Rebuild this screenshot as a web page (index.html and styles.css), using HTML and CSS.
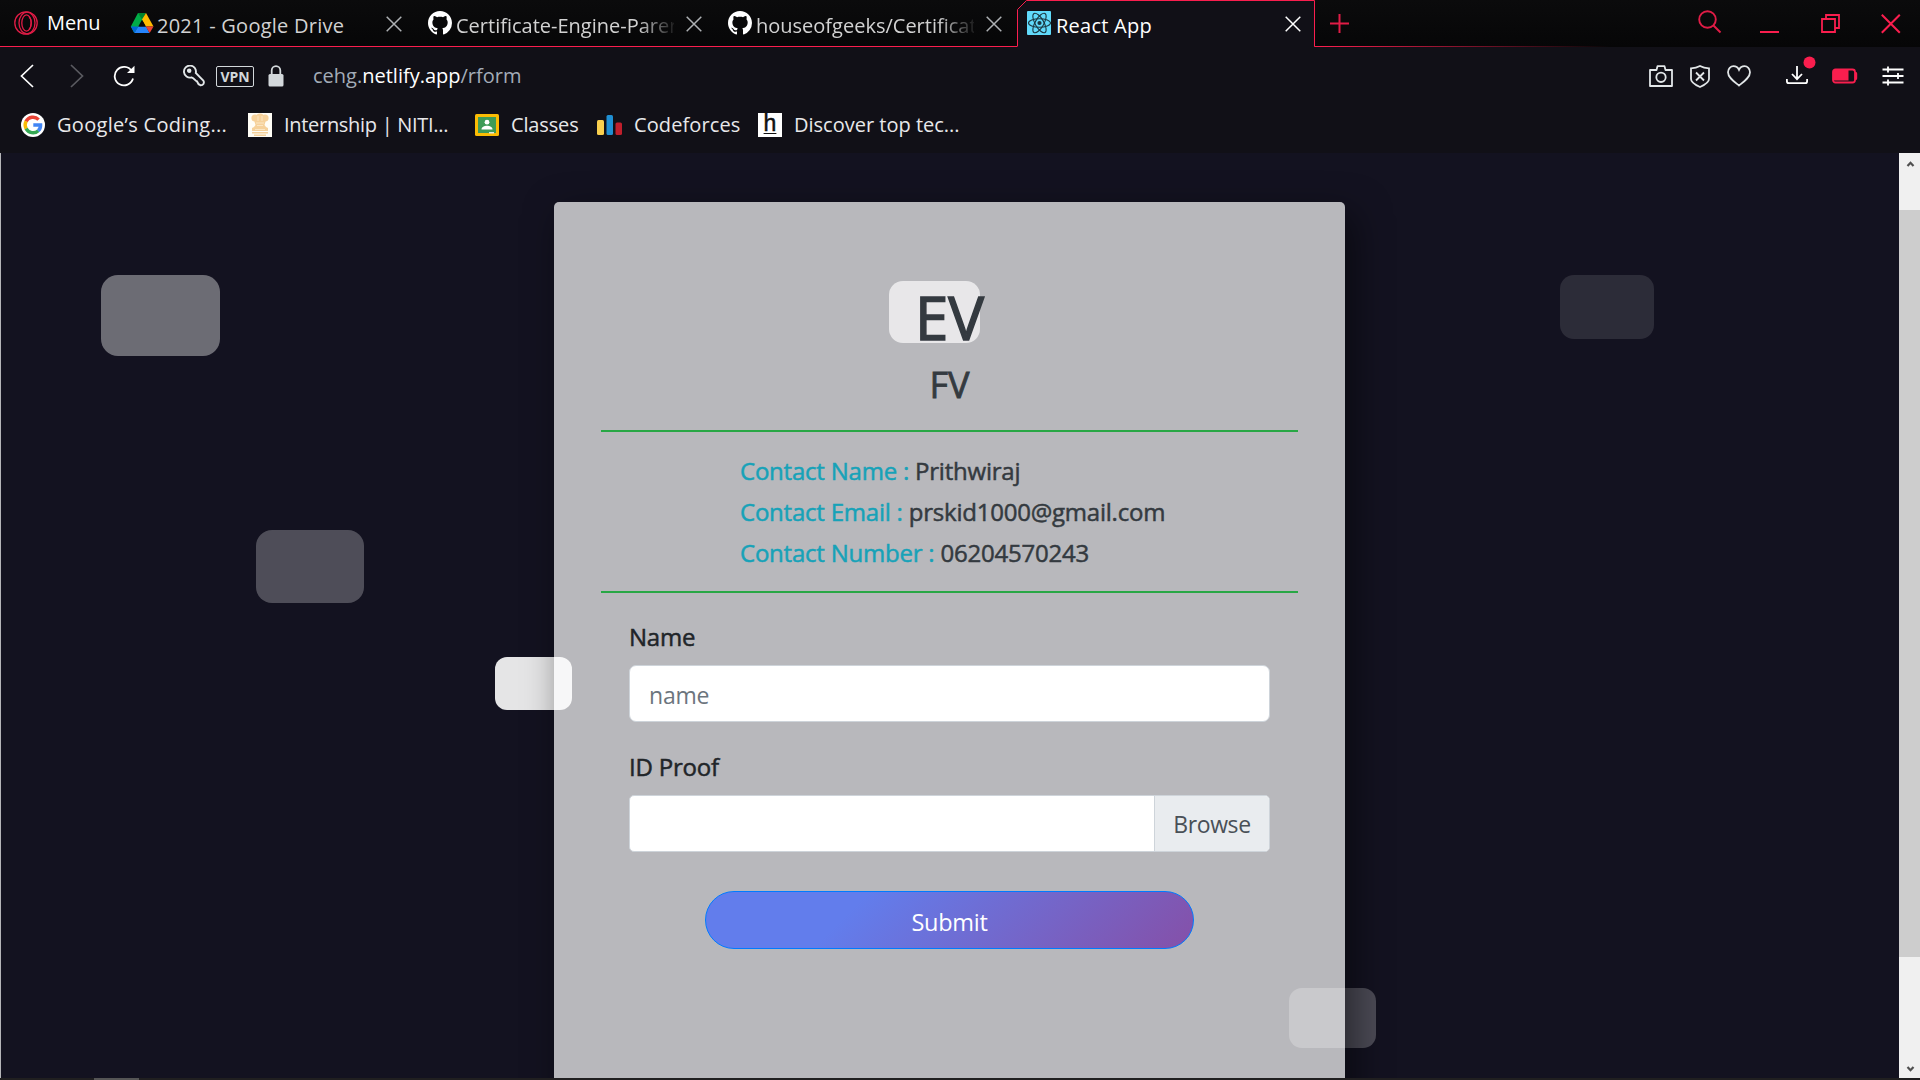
FILE: index.html
```
<!DOCTYPE html>
<html lang="en">
<head>
<meta charset="utf-8">
<title>React App</title>
<link rel="stylesheet" href="styles.css">
</head>
<body>
<svg class="defs" width="0" height="0">
  <defs>
    <symbol id="github" viewBox="0 0 16 16"><path fill="#fff" d="M8 0C3.58 0 0 3.58 0 8c0 3.54 2.29 6.53 5.47 7.59.4.07.55-.17.55-.38 0-.19-.01-.82-.01-1.49-2.01.37-2.53-.49-2.69-.94-.09-.23-.48-.94-.82-1.13-.28-.15-.68-.52-.01-.53.63-.01 1.08.58 1.23.82.72 1.21 1.87.87 2.33.66.07-.52.28-.87.51-1.07-1.78-.2-3.64-.89-3.64-3.95 0-.87.31-1.59.82-2.15-.08-.2-.36-1.02.08-2.12 0 0 .67-.21 2.2.82.64-.18 1.32-.27 2-.27s1.36.09 2 .27c1.53-1.04 2.2-.82 2.2-.82.44 1.1.16 1.92.08 2.12.51.56.82 1.27.82 2.15 0 3.07-1.87 3.75-3.65 3.95.29.25.54.73.54 1.48 0 1.07-.01 1.93-.01 2.2 0 .21.15.46.55.38A8.01 8.01 0 0 0 16 8c0-4.42-3.58-8-8-8z"/></symbol>
    <symbol id="cross" viewBox="0 0 16 16"><path d="M.7.7l14.6 14.6M15.3.7L.7 15.3" fill="none" stroke="currentColor" stroke-width="1.5"/></symbol>
  </defs>
</svg>

<header class="browser">
  <div class="tabstrip">
    <div class="menu">
      <svg width="24" height="24" viewBox="0 0 24 24" fill="none" stroke="#e01c46" stroke-width="1.3"><circle cx="12" cy="12" r="11.2"/><ellipse cx="13" cy="12" rx="8" ry="10.8"/><ellipse cx="12.5" cy="12" rx="4.7" ry="8.2"/><path d="M15 5.5c3 3 3 10 0 13"/></svg>
      <span>Menu</span>
    </div>
    <div class="tab tab-drive">
      <svg width="24" height="24" viewBox="0 0 24 24"><path fill="#00ac47" d="M8 2h3.6L15 8 4.3 22 .8 15.500z"/><path fill="#00832d" d="M8 2h8l-4 6.500z"/><path fill="#ffba00" d="M16 2l7.500 13.500h-7.800L12 8.500z"/><path fill="#2684fc" d="M8.300 15.500h7.800L19.500 22H4.300z"/><path fill="#0066da" d="M.8 15.500h7.500L4.300 22z"/><path fill="#ea4335" d="M15.700 15.500h7.800L19.700 22z"/><path fill="#090909" d="M12 8.800l3.800 6.700H8.200z"/></svg>
      <span class="title">2021 - Google Drive</span>
      <svg class="close" width="16" height="16"><use href="#cross"/></svg>
    </div>
    <div class="tab tab-parent">
      <svg width="24" height="24"><use href="#github"/></svg>
      <span class="title fade">Certificate-Engine-Parent</span>
      <svg class="close" width="16" height="16"><use href="#cross"/></svg>
    </div>
    <div class="tab tab-repo">
      <svg width="24" height="24"><use href="#github"/></svg>
      <span class="title fade">houseofgeeks/Certificate</span>
      <svg class="close" width="16" height="16"><use href="#cross"/></svg>
    </div>
    <div class="tab tab-active">
      <svg class="outline" width="300" height="48" viewBox="0 0 300 48"><path d="M.5 48V9.500L9.500.500H297.500V46.500H300V48z" fill="#111017"/><path d="M.5 46V9.500L9.500.500H297.500V46.500H300" fill="none" stroke="#fa1e4e"/></svg>
      <svg width="24" height="24" viewBox="0 0 24 24"><rect width="24" height="24" rx="1" fill="#61dafb"/><g fill="none" stroke="#1b3640" stroke-width="1.100"><ellipse cx="12.500" cy="12" rx="11" ry="4.300"/><ellipse cx="12.500" cy="12" rx="11" ry="4.300" transform="rotate(60 12.500 12)"/><ellipse cx="12.500" cy="12" rx="11" ry="4.300" transform="rotate(120 12.500 12)"/></g><circle cx="12.500" cy="12" r="2.100" fill="#1b3640"/></svg>
      <span class="title">React App</span>
      <svg class="close" width="16" height="16"><use href="#cross"/></svg>
    </div>
    <svg class="newtab" width="20" height="20" viewBox="0 0 20 20"><path d="M9.500 0v19M0 9.500h19" stroke="#e01c46" stroke-width="2"/></svg>
    <div class="window-controls">
      <svg width="24" height="24" viewBox="0 0 24 24" fill="none" stroke="#e01c46" stroke-width="1.900"><circle cx="9.500" cy="9.500" r="8.300"/><path d="M15.500 15.500l7 7"/></svg>
      <svg width="20" height="20" viewBox="0 0 20 20" fill="none" stroke="#fa1e4e" stroke-width="2"><path d="M0 18h19"/></svg>
      <svg width="20" height="20" viewBox="0 0 20 20" fill="none" stroke="#fa1e4e" stroke-width="1.800"><path d="M1 5h13v13H1zM5 5V1h13v13h-4"/></svg>
      <svg width="20" height="20" viewBox="0 0 20 20" fill="none" stroke="#fa1e4e" stroke-width="2"><path d="M.8.800l18 18M18.800.800l-18 18"/></svg>
    </div>
  </div>

  <div class="toolbar">
    <svg class="back" width="14" height="24" viewBox="0 0 14 24" fill="none" stroke="#fff" stroke-width="1.700"><path d="M13 1L1.500 12 13 23"/></svg>
    <svg class="forward" width="14" height="24" viewBox="0 0 14 24" fill="none" stroke="#5a5a60" stroke-width="1.700"><path d="M1 1l11.500 11L1 23"/></svg>
    <svg class="reload" width="23" height="22" viewBox="0 0 23 22"><path d="M20 13.500A9.300 9.300 0 1 1 18.800 6" fill="none" stroke="#fff" stroke-width="1.800"/><path d="M21.500.8V8H14z" fill="#fff"/></svg>
    <svg class="key" width="22" height="22" viewBox="0 0 22 22" fill="none" stroke="#e2e6e8" stroke-width="1.900"><path d="M8.500 12.400A6 6 0 1 1 12.800 8L20.300 15.500c1.500 2.500-.2 5-3 4.700-2.600-1-2.600-2.300-3.100-3.700-2-.6-2.600-3-5.700-4.100z"/><circle cx="6.200" cy="5.700" r="1.300" fill="#e2e6e8"/></svg>
    <span class="vpn">VPN</span>
    <svg class="lock" width="16" height="22" viewBox="0 0 16 22"><path d="M3.700 10V5.500a4.300 4.300 0 0 1 8.600 0V10" fill="none" stroke="#d3d8db" stroke-width="1.800"/><rect x=".5" y="9" width="15" height="12.500" rx="1.500" fill="#d3d8db"/></svg>
    <div class="url">cehg.<b>netlify.app</b>/rform</div>
    <div class="tools">
      <svg width="24" height="22" viewBox="0 0 24 22" fill="none" stroke="#e2e6e8" stroke-width="1.800"><path d="M1 5h6.500l1-3.800h7L16.500 5H23v16H1z" stroke-linejoin="round"/><circle cx="12" cy="12.300" r="4.700"/></svg>
      <svg width="20" height="23" viewBox="0 0 20 23" fill="none" stroke="#e2e6e8" stroke-width="1.800"><path d="M10 1c3 1.700 6 2.200 9 2.300V14c0 3.500-4.500 6-9 8-4.500-2-9-4.500-9-8V3.300C4 3.200 7 2.700 10 1zM6 7.500l8 8M14 7.500l-8 8"/></svg>
      <svg width="24" height="22" viewBox="0 0 24 22" fill="none" stroke="#e2e6e8" stroke-width="1.800"><path d="M12 20.500C7 16.500 1 12.500 1 7.200 1 3.500 3.700 1.200 6.500 1.200c2.500 0 4.500 1.500 5.500 3.600 1-2.100 3-3.600 5.500-3.600 2.800 0 5.500 2.300 5.500 6 0 5.300-6 9.300-11 13.300z"/></svg>
      <svg class="download" width="30" height="30" viewBox="0 0 30 30"><g fill="none" stroke="#fff" stroke-width="1.800"><path d="M11 10v13M6 18l5 5.200 5-5.200M.9 23v2.200q0 2 2 2h16.200q2 0 2-2V23"/></g><circle cx="23.500" cy="6.500" r="6" fill="#fa1e4e"/></svg>
      <svg width="26" height="16" viewBox="0 0 26 16"><rect x="1" y="1.500" width="22" height="13" rx="2.500" fill="none" stroke="#fa1e4e" stroke-width="1.800"/><path d="M1 2h15.500v10.500H1zM23 4h1.500l.7 1.500v5l-.7 1.500H23z" fill="#fa1e4e"/></svg>
      <svg width="22" height="20" viewBox="0 0 22 20" fill="none" stroke="#fff" stroke-width="1.800"><path d="M.5 3.500h21M.5 10h21M.5 16.500h21M6 .5v6M16 7v6M6 13.500v6"/></svg>
    </div>
  </div>

  <nav class="bookmarks">
    <a class="bm-google"><svg width="24" height="24" viewBox="0 0 24 24"><circle cx="12" cy="12" r="12" fill="#fff"/><g fill="none" stroke-width="3.400"><path stroke="#ea4335" d="M5 8.500A7.800 7.800 0 0 1 17.600 6.600"/><path stroke="#fbbc05" d="M5.200 15.800A7.800 7.800 0 0 1 5.100 8.300"/><path stroke="#34a853" d="M17.300 17.700A7.800 7.800 0 0 1 5.100 15.600"/><path stroke="#4285f4" d="M12.300 12h7.300c.1 2.500-.8 4.400-2.400 5.800"/></g></svg><span>Google’s Coding...</span></a>
    <a class="bm-niti"><svg width="24" height="24" viewBox="0 0 24 24"><path fill="#fffdf6" d="M0 0h24v24H0z"/><g fill="#f6d19a"><circle cx="7" cy="5" r="3.600"/><circle cx="12" cy="4.500" r="4"/><circle cx="17" cy="5" r="3.600"/><path d="M6 7h12l-1.500 5 1.500 2 2 1v3H4v-3l2-1 1.500-2zM4 19h16v1.500H4zM6 21.500h12V23H6z"/></g><path d="M8 10h8M9 12.500h6M7 16.500h10M10 3v5M14 3v5" stroke="#fbe6c3"/></svg><span>Internship | NITI...</span></a>
    <a class="bm-classes"><svg width="24" height="22" viewBox="0 0 24 22"><rect width="24" height="22" rx="1.500" fill="#fbbc04"/><path fill="#3f9b57" d="M3 3h18v16H3z"/><circle cx="12" cy="8.200" r="2.400" fill="#fff"/><path d="M6.500 15.500c0-5 11-5 11 0z" fill="#fff"/><path d="M14 18h5v1.500h-5z" fill="#d9e9dc"/></svg><span>Classes</span></a>
    <a class="bm-cf"><svg width="26" height="20" viewBox="0 0 26 20"><rect y="5" width="7" height="15" rx="1.500" fill="#f9cf4e"/><rect x="9.500" width="6.500" height="20" rx="1.500" fill="#1f8fd3"/><rect x="18.500" y="7.500" width="6.500" height="12.500" rx="1.500" fill="#c01f2c"/></svg><span>Codeforces</span></a>
    <a class="bm-h"><span class="h-icon">h</span><span>Discover top tec...</span></a>
  </nav>
</header>

<main class="viewport">
  <section class="page">
    <i class="pill p1"></i><i class="pill p2"></i><i class="pill p3"></i><i class="pill p4"></i><i class="pill p5"></i><i class="pill p6"></i>
    <form class="card">
      <h1>EV</h1>
      <h3>FV</h3>
      <div class="contact">
        <p><span>Contact Name :</span> Prithwiraj</p>
        <p><span>Contact Email :</span> prskid1000@gmail.com</p>
        <p><span>Contact Number :</span> 06204570243</p>
      </div>
      <div class="fields">
        <label>Name</label>
        <div class="input"><span class="placeholder">name</span></div>
        <label class="l-id">ID Proof</label>
        <div class="input file"><span class="browse">Browse</span></div>
        <button type="button" class="submit">Submit</button>
      </div>
    </form>
  </section>
  <aside class="scrollbar">
    <svg width="21" height="21" viewBox="0 0 21 21"><path d="M8.500 13l3-3.200 3 3.200" fill="none" stroke="#505050" stroke-width="2.200"/></svg>
    <div class="thumb"></div>
    <svg width="21" height="21" viewBox="0 0 21 21"><path d="M8.500 10l3 3.200 3-3.200" fill="none" stroke="#505050" stroke-width="2.200"/></svg>
  </aside>
</main>
<footer class="taskbar"><i></i></footer>
</body>
</html>
```
FILE: styles.css
```
* { box-sizing: border-box; }
body {
  margin: 0;
  width: 1920px;
  height: 1080px;
  overflow: hidden;
  display: flex;
  flex-direction: column;
  background: #111017;
  color: #fff;
  font-family: "Open Sans", "Noto Sans", sans-serif;
  font-size: 20px;
  white-space: nowrap;
}
svg { display: block; flex: none; }
.defs { position: absolute; }

.browser { height: 153px; flex: none; }
.tabstrip {
  height: 47px;
  display: flex;
  align-items: flex-start;
  background:
    linear-gradient(90deg, #fa1e4e 1320px, transparent 1610px) 0 46px / 100% 1px no-repeat,
    linear-gradient(#0b0b0c, #060607);
}
.menu { display: flex; width: 130px; padding: 11px 0 0 14px; }
.menu span { margin-left: 9px; line-height: 24px; letter-spacing: -0.1px; }
.tab { display: flex; padding-top: 11px; color: #d2d2d2; }
.tab .title { line-height: 30px; height: 32px; overflow: hidden; margin-left: 4px; }
.tab .close { margin: 5px 0 0 auto; color: #aeb1b4; }
.tab-drive { width: 272px; }
.tab-parent { width: 274px; margin-left: 26px; }
.tab-repo { width: 274px; margin-left: 26px; }
.tab-active { width: 300px; margin-left: 15px; padding: 11px 16px 0 10px; position: relative; color: #fff; }
.tab-active > * { position: relative; }
.tab-active .outline { position: absolute; left: 0; top: 0; }
.tab-active .close { color: #fff; }
.tab-active .title { margin-left: 5px; letter-spacing: 0.25px; }
.fade { width: 218px; -webkit-mask-image: linear-gradient(90deg, #000 182px, transparent 222px); mask-image: linear-gradient(90deg, #000 182px, transparent 222px); }
.tab-drive .title { margin-left: 3px; letter-spacing: 0.25px; }
.newtab { margin: 14px 0 0 13px; }
.window-controls { display: flex; margin: 10px 19px 0 auto; }
.window-controls svg + svg { margin-top: 4px; }
.window-controls svg:nth-child(2) { margin-left: 38px; }
.window-controls svg:nth-child(3) { margin-left: 41px; }
.window-controls svg:nth-child(4) { margin-left: 40px; }

.toolbar { height: 58px; display: flex; align-items: center; padding: 0 16px 0 20px; }
.forward { margin-left: 36px; }
.reload { margin-left: 29px; }
.key { margin-left: 47px; }
.vpn {
  width: 38px; height: 21px; margin-left: 11px;
  border: 1px solid #d3d8db; border-radius: 2px;
  font: 700 14px/19px "Open Sans", sans-serif; letter-spacing: -0.1px; text-align: center; color: #d3d8db;
}
.lock { margin-left: 14px; }
.url { margin-left: 29px; color: #a3acb8; line-height: 28px; }
.url b { color: #fff; font-weight: 400; }
.tools { display: flex; align-items: center; margin-left: auto; }
.tools svg:nth-child(2) { margin-left: 17px; }
.tools svg:nth-child(3) { margin-left: 17px; }
.tools svg:nth-child(4) { margin: -10px 0 0 35px; }
.tools svg:nth-child(5) { margin-left: 16px; }
.tools svg:nth-child(6) { margin-left: 24px; }

.bookmarks { height: 40px; display: flex; align-items: center; padding-left: 21px; color: #e8e8ea; }
.bookmarks a { display: flex; align-items: center; }
.bookmarks a > span:last-child { margin-left: 12px; line-height: 28px; }
.bm-google { width: 227px; letter-spacing: 0.3px; }
.bm-niti { width: 227px; letter-spacing: -0.3px; }
.bm-classes { width: 122px; letter-spacing: -0.15px; }
.bm-cf { width: 161px; letter-spacing: 0.1px; }
.bookmarks .bm-cf > span:last-child { margin-left: 11px; }
.h-icon { width: 24px; height: 24px; background: #fff; color: #111; font: 400 23px/20px "Liberation Sans", sans-serif; -webkit-text-stroke: 0.5px; text-align: center; text-decoration: underline; text-decoration-thickness: 1px; text-underline-offset: 2px; }

.viewport { height: 925px; flex: none; display: flex; border-left: 1px solid #b5b5b9; }
.page { position: relative; flex: 1; overflow: hidden; background: #131220; display: flex; justify-content: center; padding: 49px 1px 0 0; }
.pill { position: absolute; background: #fff; border-radius: 14px; }
.p1 { left: 100px; top: 122px; width: 119px; height: 81px; opacity: 0.38; border-radius: 17px; }
.p2 { left: 255px; top: 377px; width: 108px; height: 73px; opacity: 0.25; border-radius: 16px; }
.p3 { left: 494px; top: 504px; width: 77px; height: 53px; opacity: 0.89; border-radius: 12px; }
.p4 { left: 888px; top: 128px; width: 91px; height: 62px; opacity: 0.67; }
.p5 { left: 1559px; top: 122px; width: 94px; height: 64px; opacity: 0.11; }
.p6 { left: 1288px; top: 835px; width: 87px; height: 60px; opacity: 0.24; border-radius: 13px; }

.card {
  position: relative;
  width: 791px; height: 1000px; flex: none;
  padding: 0 47px;
  border-radius: 5px;
  background: rgba(255, 255, 255, 0.7);
  box-shadow: 8px 12px 36px rgba(0, 0, 0, 0.5);
  color: #343a40;
  text-align: center;
}
h1 { margin: 77px 0 0; font-size: 60px; line-height: 76px; font-weight: 400; letter-spacing: 0; -webkit-text-stroke: 1.5px; }
h3 { margin: 9px 0 0; font-size: 36px; line-height: 42px; font-weight: 400; letter-spacing: 0; -webkit-text-stroke: 0.8px; }
.contact { margin-top: 24px; height: 163px; border: solid #28a745; border-width: 2px 0; padding: 18px 0 0 139px; text-align: left; font-size: 24px; line-height: 41px; letter-spacing: -0.22px; -webkit-text-stroke: 0.5px; }
.contact p { margin: 0; }
.contact span { color: #17a2b8; }
.fields { padding: 26px 28px 0; text-align: left; font-size: 24px; }
label { display: block; line-height: 35px; color: #212529; letter-spacing: -0.2px; -webkit-text-stroke: 0.5px; }
.l-id { margin-top: 27px; }
.input { height: 57px; margin-top: 11px; background: #fff; border: 1px solid #ced4da; border-radius: 7px; padding-left: 19px; font-size: 23px; line-height: 58px; color: #6c757d; }
.placeholder { letter-spacing: -0.2px; }
.file { display: flex; justify-content: flex-end; border-radius: 5px; overflow: hidden; padding: 0; }
.browse { width: 115px; border-left: 1px solid #ced4da; background: #e9ecef; color: #495057; text-align: center; letter-spacing: -0.4px; line-height: 56px; }
.submit {
  display: block; width: 489px; height: 58px; margin: 39px auto 0; padding: 3px 0 0;
  border: 1px solid #007bff; border-radius: 29px;
  background: linear-gradient(135deg, #627dec 0%, #627dec 30%, #8550a8 100%);
  color: #fff; font: 400 23.500px/50px "Open Sans", sans-serif; letter-spacing: -0.3px;
}

.scrollbar { width: 21px; background: #f0f0f0; display: flex; flex-direction: column; justify-content: space-between; }
.thumb { height: 747px; margin-top: 36px; margin-bottom: auto; background: #cdcdcd; }
.taskbar { height: 2px; background: #201f20; }
.taskbar i { display: block; width: 45px; height: 2px; margin-left: 94px; background: #555; }
```
